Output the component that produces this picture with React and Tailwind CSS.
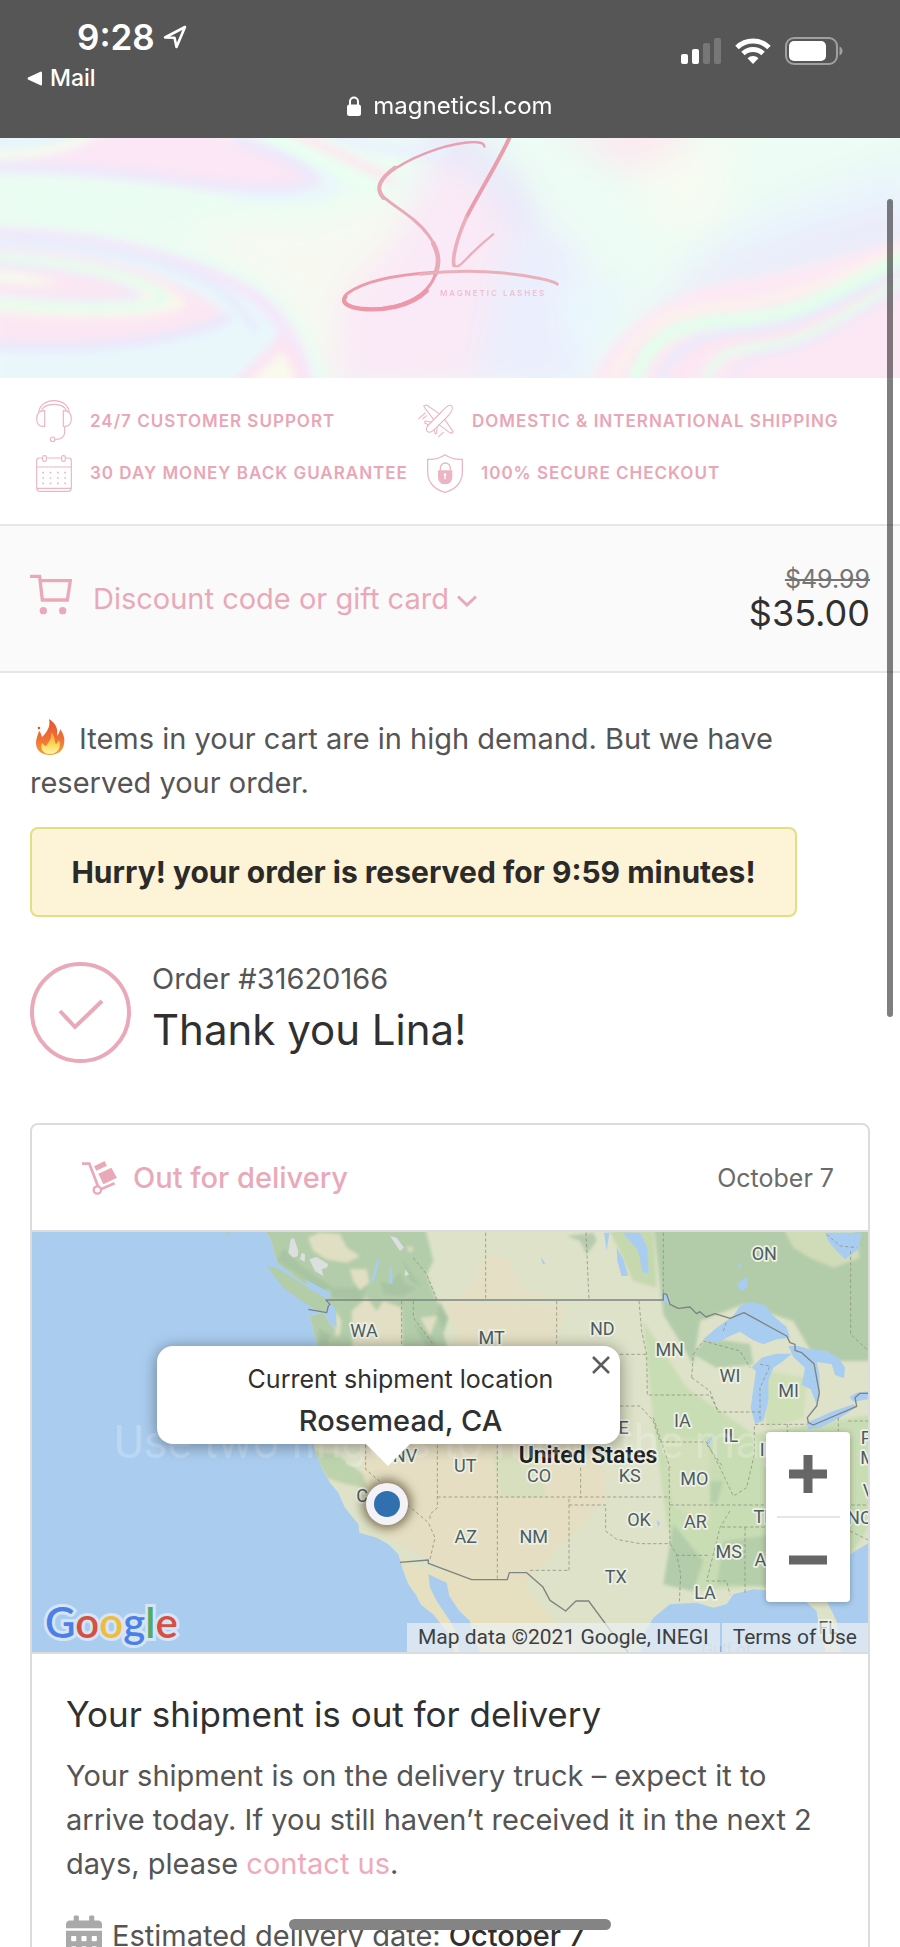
import React, { useState } from 'react';
import { FaCalendarAlt } from 'react-icons/fa';

const stateLabels = [
    ['WA', 1092, 348],
    ['MT', 1475, 370],
    ['ND', 1807, 343],
    ['MN', 2009, 405],
    ['WI', 2190, 482],
    ['MI', 2366, 528],
    ['NE', 1852, 640],
    ['IA', 2047, 617],
    ['IL', 2193, 664],
    ['IN', 2306, 705],
    ['ON', 2293, 116],
    ['NV', 1215, 722],
    ['CA', 1104, 842],
    ['UT', 1396, 752],
    ['CO', 1617, 784],
    ['KS', 1889, 784],
    ['MO', 2083, 791],
    ['AZ', 1397, 966],
    ['NM', 1601, 966],
    ['OK', 1917, 916],
    ['AR', 2086, 922],
    ['TN', 2296, 907],
    ['MS', 2186, 1011],
    ['AL', 2296, 1036],
    ['TX', 1847, 1086],
    ['LA', 2115, 1134],
    ['NC', 2578, 908],
    ['PA', 2615, 668],
    ['MD', 2622, 728],
    ['VA', 2622, 828],
    ['FL', 2484, 1240],
];

const StatusBar = () => (
    <header className="bg-[#565656] text-white h-[138px] shrink-0 relative z-20">
        <div className="flex justify-between pl-[77px] pr-[57px] pt-[17px]">
            <div className="flex items-center gap-2 h-10">
                <span className="text-[35px] leading-10 font-semibold">9:28</span>
                <svg className="w-6 h-6" viewBox="0 0 24 24" fill="none" stroke="currentColor" strokeWidth="2.6" strokeLinejoin="round">
                    <path d="M22 2 L2 12.5 L11.5 12.8 L13.5 22 Z" />
                </svg>
            </div>
            <div className="flex items-center gap-[14px] pt-5 h-[48px]">
                <svg className="w-10 h-[26px]" viewBox="0 0 40 26" fill="currentColor">
                    <rect x="0" y="16" width="7" height="10" rx="2" />
                    <rect x="11" y="11" width="7" height="15" rx="2" />
                    <rect x="22" y="5" width="7" height="21" rx="2" opacity=".2" />
                    <rect x="33" y="0" width="7" height="26" rx="2" opacity=".2" />
                </svg>
                <svg className="w-9 h-[26px]" viewBox="0 0 36 26" fill="none" stroke="currentColor" strokeWidth="5">
                    <path d="M2 9.5 A23 23 0 0 1 34 9.5" />
                    <path d="M8 15.5 A14.5 14.5 0 0 1 28 15.5" />
                    <path d="M18 26 L12.5 20.2 A8 8 0 0 1 23.5 20.2 Z" fill="currentColor" stroke="none" />
                </svg>
                <svg className="w-[58px] h-7" viewBox="0 0 58 28" fill="none">
                    <rect x="1" y="1" width="51" height="26" rx="8" stroke="#a0a0a0" strokeWidth="2" />
                    <rect x="4" y="4" width="37" height="20" rx="5" fill="#fff" />
                    <path d="M54.500 9.500 q3 1.500 3 4.500 t-3 4.500 z" fill="#a0a0a0" />
                </svg>
            </div>
        </div>
        <a href="#mail" className="flex items-center gap-2 pl-[27px] w-fit text-[23px] leading-[26px] font-medium">
            <svg className="w-[15px] h-[15px]" viewBox="0 0 15 15" fill="currentColor">
                <path d="M14 0.500 Q15 0.500 15 2 V13 Q15 14.500 14 14.500 L1 8.500 Q0 7.500 1 6.500 Z" />
            </svg>
            Mail
        </a>
        <div className="flex items-center justify-center gap-3 text-[24px] leading-[30px]">
            <svg className="w-[14px] h-5" viewBox="0 0 14 20" fill="none">
                <rect x="0" y="8.500" width="14" height="11.500" rx="2.500" fill="#fff" />
                <path d="M3 9 V5.500 a4 4 0 0 1 8 0 V9" stroke="#fff" strokeWidth="2" />
            </svg>
            <span>magneticsl.com</span>
        </div>
    </header>
);

const Banner = () => (
    <section className="relative h-[240px] shrink-0 overflow-hidden bg-[#edfcf4] flex justify-center">
        <svg className="absolute inset-0 w-full h-full" viewBox="0 8 2700 720" preserveAspectRatio="none">
            <defs>
                <filter id="soft" x="-30%" y="-30%" width="160%" height="160%">
                    <feGaussianBlur stdDeviation="50" />
                </filter>
                <filter id="mid" x="-30%" y="-30%" width="160%" height="160%">
                    <feGaussianBlur stdDeviation="13" />
                </filter>
            </defs>
            <rect y="8" width="2700" height="720" fill="#edfcf4" />
            <g filter="url(#soft)">
                <path d="M560 280 L1200 200 L1200 760 L960 760 L860 500 Z" fill="#f7f9f1" />
                <path d="M0 130 L800 210 L1200 170 L900 260 L300 240 L0 230 Z" fill="#e8fef1" />
                <path d="M1020 480 L1180 320 L1300 60 L1420 120 L1540 260 L1480 760 L1000 760 Z" fill="#fae9f6" />
                <path d="M1250 -20 L1400 -20 L1560 140 L1640 300 L1560 300 L1440 110 L1300 60 Z" fill="#e6e4fb" />
                <path d="M1540 260 L1700 300 L1800 480 L1780 760 L1420 760 L1480 440 Z" fill="#ebeefd" />
                <path d="M1660 440 L1900 440 L1820 600 L1700 700 Z" fill="#e9f6fd" />
                <path d="M1660 -40 L2080 -40 L2000 120 L1880 110 Z" fill="#fce8f1" />
                <path d="M1900 90 L2200 0 L2160 250 L2000 300 Z" fill="#f7fbf1" />
                <path d="M2000 400 L2300 220 L2740 60 L2740 260 L2200 360 Z" fill="#e9f4fc" />
                <path d="M1850 600 L2100 400 L2740 200 L2740 340 L2100 480 Z" fill="#ece9fb" />
            </g>
            <g filter="url(#mid)" fill="none">
                {/* upper left swirl */}
                <path d="M-20 20 C80 30 160 20 240 0" stroke="#e4f4fb" strokeWidth="40" />
                <path d="M-20 55 C120 50 180 40 260 0" stroke="#f8faec" strokeWidth="22" />
                <path d="M-20 75 C150 70 230 40 320 -10 L640 -10 C760 30 860 80 940 130 C860 165 700 155 560 140 C400 110 200 90 -20 90 Z" fill="#fbe7f5" />
                <path d="M-20 96 C240 96 420 120 620 148 C760 168 900 165 950 135 C900 80 800 40 700 10" stroke="#ede8fb" strokeWidth="32" />
                <path d="M700 180 C900 195 1030 180 1000 130 C950 80 860 30 800 0" stroke="#e8f6fc" strokeWidth="28" />
                <path d="M800 -10 C920 60 1040 120 1150 170" stroke="#e9fff0" strokeWidth="36" />
                <path d="M880 -10 C980 40 1080 80 1180 140" stroke="#fce8ef" strokeWidth="28" />
                <path d="M1000 -10 C1100 50 1220 40 1350 50" stroke="#e9f1fd" strokeWidth="34" />

                {/* lower left swirl */}
                <path d="M-20 290 C300 300 560 360 760 470 C880 560 930 650 950 760 L-20 760 Z" fill="#e9f7fb" />
                <path d="M-20 280 C320 290 560 370 720 450 C860 540 900 640 920 760" stroke="#f4e7fa" strokeWidth="42" />
                <path d="M-20 265 C320 272 590 350 770 450 C910 550 950 640 975 760" stroke="#e8fdf1" strokeWidth="18" />
                <path d="M-20 318 C260 315 480 370 620 440 C690 480 740 540 770 590" stroke="#e8edfc" strokeWidth="28" />
                <path d="M-20 338 C280 340 540 420 670 530 C620 610 380 640 -20 620 Z" fill="#fbe7f3" />
                <path d="M-20 630 C300 650 560 610 690 545" stroke="#e9e8fb" strokeWidth="30" />
                <path d="M-20 354 C260 358 500 430 560 505 C530 550 260 560 -20 530 Z" fill="#fbf8ec" />
                <path d="M-20 366 C260 375 440 430 500 490 C440 530 240 520 -20 505" stroke="#e3fdee" strokeWidth="26" />
                <path d="M-20 385 C180 400 360 440 420 480 C340 500 160 490 -20 470 Z" fill="#fce7f2" stroke="#ede8fc" strokeWidth="14" />
                <path d="M-20 405 C60 405 120 425 180 445 C100 450 40 445 -20 440 Z" fill="#f7faee" />
                <path d="M700 760 C760 700 820 660 840 620 C880 660 900 700 910 760 Z" fill="#f9faec" stroke="#fbe4f3" strokeWidth="34" />

                {/* right hand wave */}
                <g transform="translate(1350 0)">
                    <path d="M420 760 C480 560 700 450 900 430 C1080 400 1240 340 1400 300 L1400 760 Z" fill="#fce8f4" />
                    <path d="M470 760 C540 600 620 530 800 510 C1020 500 1180 420 1400 320" stroke="#fcf3ec" strokeWidth="24" />
                    <path d="M550 760 C580 610 680 560 850 555 C1060 540 1160 470 1400 350" stroke="#e3feec" strokeWidth="44" />
                    <path d="M620 760 C660 630 760 590 900 585 C1060 570 1140 510 1400 385" stroke="#e8eafd" strokeWidth="22" />
                    <path d="M680 760 C700 650 780 615 930 608 C1060 590 1140 540 1400 400" stroke="#fde5f0" strokeWidth="22" />
                    <path d="M760 760 C780 660 840 640 960 630 C1080 610 1150 560 1400 410" stroke="#e3fded" strokeWidth="24" />
                    <path d="M840 760 C860 680 900 660 1000 648 C1100 625 1160 580 1400 440" stroke="#f1e7fb" strokeWidth="18" />
                </g>
            </g>
        </svg>
        <svg className="relative w-[220px] h-[177px]" viewBox="60 24 660 530" fill="none" strokeLinecap="round">
            <path d="M493 49 C492 36 470 34 440 37 C360 46 265 85 212 125 C176 152 168 180 196 206" stroke="#ea9eae" strokeWidth="7" />
            <path d="M225 112 C180 145 164 175 190 203" stroke="#e9a9b8" strokeWidth="12" />
            <path d="M190 200 C230 235 290 265 325 315 C355 355 362 395 346 434" stroke="#e9aab8" strokeWidth="9" />
            <path d="M340 340 C358 375 358 400 346 432" stroke="#e8abb9" strokeWidth="14" />
            <path d="M347 430 C325 500 240 540 140 537 C80 534 55 512 82 490 C140 445 250 432 345 426" stroke="#ec9bac" strokeWidth="9" />
            <path d="M320 482 C270 530 190 542 125 536 C85 532 62 518 76 500" stroke="#ed98aa" strokeWidth="13" />
            <path d="M300 432 C430 416 560 425 660 445 C690 451 705 456 712 462" stroke="#eab0ba" strokeWidth="9" />
            <path d="M568 24 C530 105 470 200 440 260" stroke="#ea9dad" strokeWidth="12" />
            <path d="M440 260 C410 325 396 385 402 406" stroke="#eaafba" strokeWidth="11" />
            <path d="M402 407 C415 415 430 395 450 375 C475 350 500 328 520 312" stroke="#eaafba" strokeWidth="7" />
            <text x="360" y="497" fontSize="24" letterSpacing="6" fill="#efb9ca" fontWeight="500">MAGNETIC LASHES</text>
        </svg>
    </section>
);

const HeadsetIcon = () => (
    <svg className="w-9 h-[42px] shrink-0" viewBox="0 0 108 126" fill="none" stroke="#ecb5c3" strokeWidth="3.500">
        <path d="M8 36 C12 14 32 2 54 2 C76 2 96 14 100 36" />
        <path d="M16 34 C20 20 36 13 54 13 C72 13 88 20 92 34" />
        <path d="M26 32 V79 H22 C8 79 2 70 2 56 C2 40 12 32 26 32 Z" />
        <path d="M82 32 V79 H86 C100 79 106 70 106 56 C106 40 96 32 82 32 Z" />
        <path d="M86 80 V95 C86 110 76 118 58 118" />
        <circle cx="50" cy="118" r="7" />
    </svg>
);

const CalendarIcon = () => (
    <svg className="w-9 h-[37px] shrink-0" viewBox="0 0 108 111" fill="none" stroke="#ecb5c3" strokeWidth="3.500">
        <path d="M20 9 H10 Q2 9 2 17 V98 Q2 109 13 109 H95 Q106 109 106 98 V17 Q106 9 98 9 H88 M32 9 H76" />
        <path d="M2 36 H106 M3 100 H105" />
        <rect x="20" y="2" width="11" height="17" rx="5" />
        <rect x="77" y="2" width="11" height="17" rx="5" />
        <path d="M19 53 H92 M19 69 H92 M19 85 H92" strokeWidth="5" strokeDasharray="5 17" />
    </svg>
);

const PlaneIcon = () => (
    <svg className="w-9 h-[34px] shrink-0" viewBox="0 0 108 102" fill="none" stroke="#ecb5c3" strokeWidth="3.200" strokeLinejoin="round" strokeLinecap="round">
        <path d="M97 4 C88 4 80 14 70 24 L34 60 C26 68 22 78 28 82 C34 88 44 82 52 74 L90 36 C100 26 106 16 101 6 Q100 3 97 4 Z" />
        <path d="M62 28 L26 3 L17 6 L21 13 L45 44" />
        <path d="M80 46 L105 82 L101 88 L94 85 L63 62" />
        <path d="M31 62 L20 57 L21 51 L38 54" />
        <path d="M48 78 L52 90 L56 88 L57 70" />
        <path d="M2 44 L22 27 M14 45 L26 35 M62 98 L76 85" />
    </svg>
);

const ShieldIcon = () => (
    <svg className="w-9 h-[39px] shrink-0" viewBox="0 0 108 117" fill="none" stroke="#ecb5c3" strokeWidth="3.800">
        <path d="M54 2 C40 12 22 17 2 16 V54 C2 86 24 108 54 115 C84 108 106 86 106 54 V16 C86 17 68 12 54 2 Z" />
        <path d="M40 50 V42 a15 15 0 0 1 30 0 V50" />
        <path d="M35 51 H74 V68 C74 82 66 89 54 89 C43 89 35 82 35 68 Z" fill="#ecb5c3" />
        <path d="M54 63 V76" stroke="#fff" strokeWidth="4" />
        <circle cx="54" cy="62" r="4" fill="#fff" stroke="none" />
    </svg>
);

const Features = () => (
    <section className="h-[146px] shrink-0 pl-9 pt-[22px] flex flex-col gap-[10px] text-[17px] leading-6 font-semibold tracking-[1px] text-[#e8a6b7] whitespace-nowrap">
        <div className="flex items-center h-[42px]">
            <div className="flex items-center gap-[18px] w-[382px]">
                <HeadsetIcon />
                24/7 CUSTOMER SUPPORT
            </div>
            <div className="flex items-center gap-[18px]">
                <PlaneIcon />
                DOMESTIC &amp; INTERNATIONAL SHIPPING
            </div>
        </div>
        <div className="flex items-center h-[42px]">
            <div className="flex items-center gap-[18px] w-[391px]">
                <CalendarIcon />
                30 DAY MONEY BACK GUARANTEE
            </div>
            <div className="flex items-center gap-[18px]">
                <ShieldIcon />
                100% SECURE CHECKOUT
            </div>
        </div>
    </section>
);

const DiscountBar = () => (
    <section className="h-[149px] shrink-0 px-[30px] bg-[#fafafa] border-y-2 border-[#e6e6e6] flex items-center justify-between">
        <button type="button" className="flex items-center text-[#e9a9b8]">
            <svg className="w-[42px] h-[41px] mr-[21px] mb-2" viewBox="0 0 126 123" fill="none" stroke="#e9a9b8" strokeWidth="10">
                <path d="M0 7 H29 L37 78 H112 L121 20 H31" />
                <circle cx="40" cy="110" r="11" fill="#e9a9b8" stroke="none" />
                <circle cx="98" cy="110" r="11" fill="#e9a9b8" stroke="none" />
            </svg>
            <span className="text-[29px] leading-10">Discount code or gift card</span>
            <svg className="w-5 h-3 ml-2 mt-1" viewBox="0 0 20 12" fill="none" stroke="currentColor" strokeWidth="3">
                <path d="M1 1.500 L10 10 L19 1.500" />
            </svg>
        </button>
        <div className="text-right">
            <div className="text-[25px] leading-7 text-[#757575] line-through">$49.99</div>
            <div className="text-[36px] leading-10 text-[#303030]">$35.00</div>
        </div>
    </section>
);

const Flame = () => (
    <svg className="inline-block w-[30px] h-9 ml-[5px] mr-[14px] -mt-2" viewBox="0 0 30 36">
        <defs>
            <linearGradient id="flame" x1="0" y1="0" x2="0" y2="1">
                <stop offset="0" stopColor="#e5532f" />
                <stop offset=".55" stopColor="#ee7136" />
                <stop offset="1" stopColor="#f3a13c" />
            </linearGradient>
            <linearGradient id="core" x1="0" y1="0" x2="0" y2="1">
                <stop offset="0" stopColor="#f59a3d" />
                <stop offset=".6" stopColor="#fbdc59" />
                <stop offset="1" stopColor="#fff6b0" />
            </linearGradient>
        </defs>
        <path d="M14 0 C22 5 23 11 22 17 C24 15 25 12 25 10 C29 15 30 20 29 25 C28 32 22 36 15 36 C7 36 1 32 1 24 C1 19 3 16 4 12 C6 13 6 16 7 18 C11 14 16 8 14 0 Z" fill="url(#flame)" />
        <path d="M16 13 C21 18 19 23 21 25 C23 24 23 22 24 21 C27 29 22 35 15 35 C8 35 5 30 7 24 C9 25 9 27 11 27 C14 23 17 19 16 13 Z" fill="url(#core)" />
        <circle cx="4" cy="9" r="1.300" fill="#e5532f" />
    </svg>
);

const ShipmentMap = () => {
    const [popupOpen, setPopupOpen] = useState(true);

    return (
        <div className="relative h-[422px] border-b-2 border-[#dcdcdc] overflow-hidden bg-[#aacdef] font-['Roboto',sans-serif]">
            <svg className="w-full h-full" viewBox="96 33 2508 1260" preserveAspectRatio="xMidYMid slice">
                <defs>
                    <filter id="terrain" x="-10%" y="-10%" width="120%" height="120%">
                        <feGaussianBlur stdDeviation="5" />
                    </filter>
                    <clipPath id="land">
                        <path d="M788 20 L815 60 L822 95 L835 130 L870 155 L905 185 L950 205 L985 235 L1000 290 L1005 330 L985 300 L970 275 L930 285 L935 310 L945 345 L958 400 L945 520 L935 640 L945 690 L965 740 L990 785 L1015 815 L1035 860 L1075 910 L1078 935 L1130 950 L1165 970 L1195 1000 L1210 1050 L1225 1090 L1250 1125 L1262 1150 L1300 1180 L1340 1230 L1370 1310 L1920 1310 L1925 1250 L1960 1190 L2010 1150 L2090 1145 L2140 1160 L2180 1150 L2200 1120 L2260 1105 L2330 1110 L2415 1140 L2450 1170 L2460 1240 L2485 1310 L2525 1310 L2510 1200 L2480 1140 L2510 1060 L2550 1000 L2607 965 L2620 20 Z" />
                    </clipPath>
                </defs>
                <g clipPath="url(#land)">
                    <rect x="700" y="0" width="2000" height="1400" fill="#dde2c8" />
                    <g filter="url(#terrain)">
                        <path d="M780 0 H1270 L1300 120 L1280 160 L1310 240 L1345 290 L1330 340 L1350 400 L1050 400 L900 450 L760 200 Z" fill="#b3cdaa" />
                        <path d="M1055 270 L1100 230 L1130 270 L1150 240 L1205 260 L1210 480 L1060 500 Z" fill="#e2dfc4" />
                        <path d="M1330 240 L1700 260 L1660 400 L1370 420 L1370 340 Z" fill="#e4dfc4" />
                        <path d="M1100 600 L1800 660 L1820 830 L1560 1100 L1400 1080 L1130 930 L1080 800 Z" fill="#e5dec3" />
                        <path d="M1200 1030 L1560 1080 L1750 1300 L1340 1300 Z" fill="#e6e0c1" />
                        <path d="M1460 100 L1530 120 L1560 200 L1660 230 L1360 240 L1420 190 Z" fill="#e4dfc5" />
                        <path d="M1480 700 L1600 690 L1640 830 L1500 830 Z" fill="#d8dfbe" />
                        <path d="M935 690 L1010 700 L1090 760 L1100 800 L1040 790 L980 770 Z" fill="#bdd3ac" />
                        <path d="M1930 300 L2060 500 L2260 640 L2620 580 L2620 900 L2500 1080 L2060 1110 L2000 900 L1960 600 Z" fill="#c9ddb4" />
                        <path d="M1960 0 H2620 V420 L2450 420 L2380 300 L2230 250 L2100 300 L2080 430 L1990 280 Z" fill="#b2ccaa" />
                        <path d="M2120 350 L2250 370 L2260 430 L2150 440 L2080 400 Z" fill="#b5ceab" />
                        <path d="M2350 20 H2560 L2580 110 L2500 140 L2430 110 L2380 80 Z" fill="#d0dcb8" />
                        <path d="M1830 30 L1960 30 L1970 200 L1900 180 Z" fill="#c6d8ad" />
                        <path d="M2020 910 L2110 1020 L2080 1110 L1990 1090 Z" fill="#b3ccaa" />
                        <path d="M2080 780 L2170 780 L2150 850 L2090 830 Z" fill="#b6cfab" />
                        <path d="M2170 960 L2330 940 L2400 1000 L2370 1100 L2150 1090 Z" fill="#b6cfab" />
                        <path d="M1990 640 L2130 660 L2130 900 L2020 860 Z" fill="#d3dfba" />
                        <path d="M2290 450 L2420 470 L2410 590 L2300 620 Z" fill="#cfdfb6" />
                        <g fill="#a5c09f" opacity=".65">
                            <path d="M830 120 L880 150 L960 210 L1000 200 L900 130 L850 80 Z" />
                            <path d="M990 200 L1060 200 L1110 180 L1080 240 L1000 230 Z" />
                            <path d="M1140 180 L1170 190 L1200 150 L1215 190 L1250 200 L1210 225 L1150 220 Z" />
                            <path d="M1200 100 L1230 150 L1270 200 L1230 180 Z" />
                            <path d="M1240 310 L1280 330 L1330 390 L1280 380 Z" />
                            <path d="M955 320 L990 340 L985 370 L958 370 Z" />
                            <path d="M1320 240 L1345 290 L1330 330 L1310 280 Z" />
                            <path d="M1700 45 L1780 35 L1790 60 L1760 100 L1740 60 Z" />
                        </g>
                        <g fill="#e1dfc3">
                            <path d="M925 50 L960 35 L1020 40 L1040 80 L1080 105 L1040 125 L980 115 L940 90 Z" />
                            <path d="M1050 145 L1100 145 L1108 185 L1080 208 L1060 180 Z" />
                            <path d="M1008 270 L1024 300 L1020 340 L1006 350 Z" />
                            <path d="M1262 290 L1312 285 L1290 345 Z" />
                            <path d="M1220 75 L1242 82 L1230 96 Z" />
                        </g>
                    </g>
                    <g fill="#dcdfdf">
                        <path d="M872 55 L882 52 L895 90 L893 105 L880 110 L865 95 Z" />
                        <path d="M905 95 L915 100 L914 122 L900 115 Z" />
                        <path d="M928 115 L950 108 L985 130 L980 140 L965 145 L970 165 L945 150 Z" />
                        <path d="M1170 45 L1190 50 L1212 80 L1200 90 Z" />
                        <path d="M1215 145 L1227 160 L1215 166 Z" />
                    </g>
                </g>
                {/* Water bodies and islands */}
                <path d="M800 135 L830 140 L870 165 L915 195 L975 230 L985 260 L965 275 L920 250 L850 200 Z" fill="#b3cda9" />
                <path d="M815 125 L860 145 L850 155 Z M915 175 L990 215 L990 235 L930 205 Z M985 240 L1005 260 L1010 320 L990 290 Z" fill="#a9cdf1" />
                <path d="M1115 175 L1130 120 L1140 115 L1118 190 Z M1167 140 L1175 140 L1178 185 L1168 190 Z" fill="#a9cdf1" />
                <path d="M675 35 L685 35 L695 55 Z" fill="#b3cda9" />
                <path d="M1285 1060 L1340 1085 L1348 1125 L1378 1170 L1410 1200 L1425 1260 L1450 1310 L1378 1310 L1372 1240 L1350 1200 L1310 1140 L1290 1100 Z" fill="#aacdef" />
                <g transform="translate(1320 0)" fill="#a9cdf1">
                    <path d="M790 355 L830 320 L880 285 L900 255 L930 243 L975 252 L1000 285 L1040 318 L1050 350 L1010 355 L970 370 L940 358 L900 332 L870 345 L830 365 Z" />
                    <path d="M935 440 L965 410 L1010 398 L1055 398 L1030 420 L1000 440 L985 480 L985 540 L970 600 L945 608 L932 560 L942 490 L948 450 Z" />
                    <path d="M1045 375 L1075 375 L1110 385 L1160 390 L1195 410 L1215 440 L1212 472 L1185 462 L1175 430 L1130 422 L1138 460 L1140 525 L1128 545 L1112 505 L1085 492 L1095 440 L1060 408 Z" />
                    <path d="M1100 605 L1135 590 L1180 570 L1240 550 L1250 558 L1200 590 L1140 620 L1105 625 Z" />
                    <path d="M1228 528 L1250 515 L1300 510 V532 L1240 542 Z" />
                    <path d="M1155 35 H1265 L1255 85 L1215 115 L1190 90 L1165 60 Z" />
                    <path d="M492 35 L508 35 L500 90 Z M530 80 L550 115 L565 165 L545 165 L532 120 Z M548 35 H600 L622 80 L626 155 L608 155 L595 90 L570 60 Z" />
                    <path d="M890 190 L920 168 L925 195 L905 212 Z M890 135 L905 125 L900 140 Z M303 108 L317 130 L308 128 Z M668 215 L690 225 L690 250 L670 240 Z M800 660 L820 640 L805 680 Z" />
                    <path d="M650 898 L660 905 L655 918 Z" />
                </g>
                {/* State and province lines */}
                <g fill="none" stroke="#8f9683" strokeWidth="2.500" strokeDasharray="10 7">
                    <path d="M1240 110 L1280 160 L1310 235 M1205 240 V480 M1240 240 V290 L1300 370 M1097 672 V745 L1285 905 L1305 950 L1290 1015 M1312 672 V860 L1290 880 V900 M1312 828 H2008" />
                    <g transform="translate(1320 0)">
                        <path d="M137 35 V235 M438 35 L447 235 M670 35 V220 M350 240 V380 M540 400 H620 M597 240 L605 330 L620 400 L622 522 H810 L835 573 H960 M540 555 H600 L640 600 L660 663 H800 L840 740 L880 825 L920 800 L943 700 V610" />
                        <path d="M172 672 V1075 M387 1048 V830 M387 852 H497 V930 L530 955 L600 968 L690 968 L710 1000 L722 1060 L718 1145 M422 740 V830 M687 740 L690 968 M690 852 H1290 M270 1048 H387 M708 1003 H810 M640 590 L690 740" />
                        <path d="M850 330 L860 300 M755 470 L760 400 L790 360 L900 390 L930 440 M755 470 L810 510 L835 573 M960 430 L990 435 L960 500 V600 M1232 90 V340 L1285 390 M1160 40 L1200 75 L1250 80 M945 610 H1100 M1042 610 V640 M870 870 L840 920 L800 1080 H860 L870 1120 M845 918 H980 M915 918 V1120 M1225 600 H1290 M800 670 L850 740 M1195 590 V630 M1230 930 L1290 960" />
                    </g>
                </g>
                <g fill="none" stroke="#7d8480" strokeWidth="4" strokeLinejoin="round">
                    <path d="M925 265 L980 275 L985 255 L990 250 L978 237 H1990 V218 L2000 220 L2010 250 L2035 262 L2070 258 L2090 278 L2100 272 L2118 288 L2145 278 L2190 292 L2232 275 L2360 345 L2370 365 L2385 370 L2385 388 L2405 395 L2442 428 L2458 515 L2450 555 L2422 590 L2425 605 L2440 612 L2570 556 L2565 530 L2580 517 H2620" />
                    <path d="M1200 1024 L1285 1017 L1285 1027 L1415 1076 H1522 L1528 1055 H1580 L1628 1097 L1650 1138 L1697 1170 L1728 1140 H1766 L1840 1240 L1890 1300" />
                </g>
                <g fill="#4d5d63" stroke="#eef0e2" strokeWidth="11" strokeLinejoin="round" paintOrder="stroke" fontSize="54" textAnchor="middle">
                    {stateLabels.map(([name, x, y]) => (
                        <text key={name} x={x} y={y}>{name}</text>
                    ))}
                </g>
                <text x="1764" y="727" fontSize="69" fontWeight="600" textAnchor="middle" fill="#202124" stroke="#eef0e2" strokeWidth="11" strokeLinejoin="round" paintOrder="stroke">United States</text>
                <text x="1350" y="710" fontSize="138" textAnchor="middle" fill="#fff" opacity=".2">Use two fingers to move the map</text>
                <text x="2180" y="1302" fontSize="50" textAnchor="middle" fill="#8fb0d4">Gulf of</text>
            </svg>

            {/* Marker */}
            <div className="absolute left-[334px] top-[251px] w-[42px] h-[42px] rounded-full bg-[#f4f2f7] flex items-center justify-center shadow-[0_0_10px_4px_rgba(70,60,30,0.6)]">
                <div className="w-[26px] h-[26px] rounded-full bg-[#3070ae]"></div>
            </div>

            {popupOpen && (
                <div className="absolute left-[125px] top-[114px] w-[463px] h-[98px] rounded-2xl bg-white pl-6 pt-[15px] text-center text-[#303030] shadow-[0_2px_16px_rgba(0,0,0,0.4)] font-['Inter',sans-serif]">
                    <div className="text-[25px] leading-9">Current shipment location</div>
                    <div className="text-[29px] leading-[48px] font-medium">Rosemead, CA</div>
                    <svg className="absolute left-[208px] top-[97px] w-[46px] h-6" viewBox="0 0 46 24">
                        <path d="M0 0 H46 L23 23 Z" fill="#fff" />
                    </svg>
                    <button type="button" aria-label="Close" onClick={() => setPopupOpen(false)} className="absolute right-[10px] top-[10px]">
                        <svg className="w-[18px] h-[18px]" viewBox="0 0 18 18" stroke="#5c5c5c" strokeWidth="2.500">
                            <path d="M1 1 L17 17 M17 1 L1 17" />
                        </svg>
                    </button>
                </div>
            )}

            <div className="absolute right-[18px] top-[200px] w-[84px] h-[170px] rounded bg-white shadow-[0_1px_6px_rgba(0,0,0,0.3)] flex flex-col items-center">
                <button type="button" aria-label="Zoom in" className="flex-1 w-full flex items-center justify-center">
                    <svg className="w-[38px] h-[38px]" viewBox="0 0 38 38" stroke="#666" strokeWidth="9">
                        <path d="M19 0 V38 M0 19 H38" />
                    </svg>
                </button>
                <div className="w-[63px] h-[2px] bg-[#e6e6e6]"></div>
                <button type="button" aria-label="Zoom out" className="flex-1 w-full flex items-center justify-center">
                    <svg className="w-[38px] h-[38px]" viewBox="0 0 38 38" stroke="#666" strokeWidth="9">
                        <path d="M0 19 H38" />
                    </svg>
                </button>
            </div>

            <a href="#google" aria-label="Google" className="absolute left-[13px] bottom-1 text-[42px] leading-[52px] font-semibold font-['Lato',sans-serif] [paint-order:stroke_fill] [-webkit-text-stroke:6px_#d5e5f6]">
                <span className="text-[#4d80e6]">G</span>
                <span className="text-[#d64f42]">o</span>
                <span className="text-[#efbc3c]">o</span>
                <span className="text-[#4d80e6]">g</span>
                <span className="text-[#56a866]">l</span>
                <span className="text-[#d64f42]">e</span>
            </a>

            <div className="absolute right-0 bottom-0 flex gap-[2px] text-[21px] leading-[29px] text-[#3c3f43]">
                <span className="bg-[#edf1f2]/70 px-[11px]">Map data ©2021 Google, INEGI</span>
                <a href="#terms" className="bg-[#edf1f2]/70 px-[11px]">Terms of Use</a>
            </div>
        </div>
    );
};

const DollyIcon = () => (
    <svg className="w-[35px] h-[34px]" viewBox="0 0 105 102" fill="#e9a9b8">
        <path d="M0 8 H22 L48 76" fill="none" stroke="#e9a9b8" strokeWidth="8" />
        <circle cx="46" cy="87" r="11" fill="none" stroke="#e9a9b8" strokeWidth="7" />
        <path d="M58 84 L98 67" fill="none" stroke="#e9a9b8" strokeWidth="8" />
        <path d="M36 16 L68 0 L75 14 L43 29 Z" />
        <path d="M49 38 L88 20 L105 50 L64 70 Z" />
    </svg>
);

const ShipmentCard = () => (
    <section className="mt-[60px] border-2 border-[#dcdcdc] rounded-lg overflow-hidden">
        <div className="h-[107px] border-b-2 border-[#dcdcdc] pl-[50px] pr-[34px] flex items-center justify-between">
            <div className="flex items-center gap-4 text-[#e9a9b8] text-[29px] leading-10 font-medium">
                <DollyIcon />
                Out for delivery
            </div>
            <div className="text-[25px] leading-10 text-[#6b6b6b]">October 7</div>
        </div>
        <ShipmentMap />
        <div className="px-[34px] pt-9">
            <h2 className="text-[35px] leading-[48px] text-[#303030]">Your shipment is out for delivery</h2>
            <p className="mt-4 text-[29px] leading-[44px] text-[#555]">
                Your shipment is on the delivery truck – expect it to<br />
                arrive today. If you still haven’t received it in the next 2<br />
                days, please <a href="#contact" className="text-[#eeaabb]">contact us</a>.
            </p>
            <div className="mt-7 flex items-center gap-[10px] text-[29px] leading-[44px] text-[#555]">
                <FaCalendarAlt className="w-9 h-[42px] text-[#a9a9a9]" />
                <span>Estimated delivery date: <span className="text-[#303030] font-medium">October 7</span></span>
            </div>
        </div>
    </section>
);

const App = () => {
    return (
        <div className="relative h-screen overflow-hidden flex flex-col bg-white font-['Inter',sans-serif]">
            <StatusBar />
            <Banner />
            <Features />
            <DiscountBar />
            <main className="px-[30px] pt-11">
                <p className="text-[29px] leading-[44px] text-[#555]">
                    <Flame />Items in your cart are in high demand. But we have<br />
                    reserved your order.
                </p>
                <div className="mt-[22px] mr-[73px] h-[90px] rounded-lg border-2 border-[#dfe083] bg-[#fdf3d6] flex items-center justify-center text-[30px] leading-10 font-bold text-[#2c2a28] whitespace-nowrap">
                    Hurry! your order is reserved for 9:59 minutes!
                </div>
                <div className="mt-11 flex items-center gap-[21px]">
                    <svg className="w-[101px] h-[101px]" viewBox="0 0 101 101" fill="none" stroke="#e9a9b8" strokeWidth="4">
                        <circle cx="50.500" cy="50.500" r="48.500" />
                        <path d="M30 49 L45 65 L72 39" />
                    </svg>
                    <div>
                        <div className="text-[29px] leading-[36px] text-[#555]">Order #31620166</div>
                        <h1 className="text-[42px] leading-[66px] text-[#303030]">Thank you Lina!</h1>
                    </div>
                </div>
                <ShipmentCard />
            </main>

            {/* Scroll indicator and home bar */}
            <div className="absolute right-[7px] top-[199px] w-[6px] h-[818px] rounded-full bg-black/50 z-30"></div>
            <div className="absolute left-1/2 -translate-x-1/2 bottom-[17px] w-[322px] h-[11px] rounded-full bg-[#848484] z-30"></div>
        </div>
    );
};

export default App;
